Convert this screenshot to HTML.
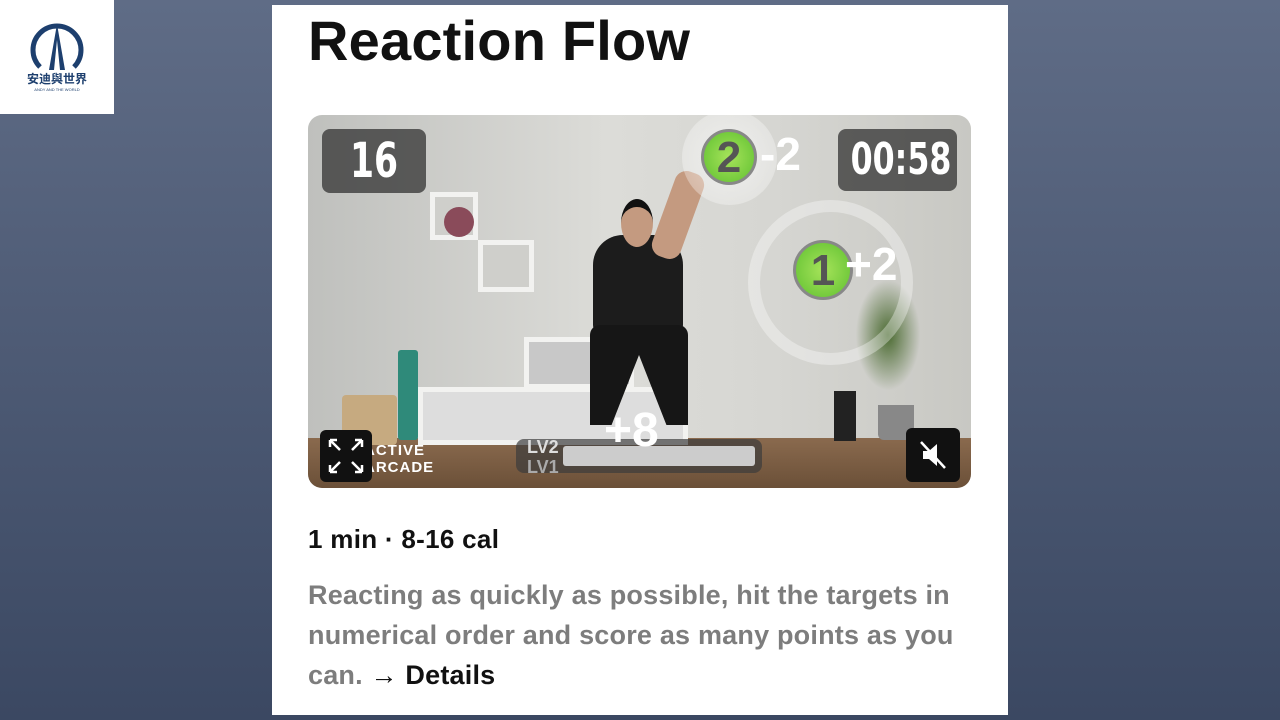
<!DOCTYPE html>
<html><head><meta charset="utf-8"><style>
body{margin:0;width:1280px;height:720px;overflow:hidden;background:linear-gradient(#5f6c86,#3b4862);font-family:"Liberation Sans","Noto Sans CJK SC",sans-serif;position:relative}
.logo{position:absolute;left:0;top:0;width:114px;height:114px;background:#fff}
.card{position:absolute;left:272px;top:5px;width:736px;height:710px;background:#fff}
h1{position:absolute;left:36px;top:3px;margin:0;font-size:56px;font-weight:bold;color:#111;letter-spacing:0.2px}
.vid{position:absolute;left:36px;top:110px;width:663px;height:373px;border-radius:14px;overflow:hidden;background:linear-gradient(90deg,#bfc0bd,#dcdcd8 45%,#d6d6d2 70%,#c8c8c3);}
.abs{position:absolute}
.box{position:absolute;border:5px solid #f2f2f0;background:#cfcfcb;box-sizing:border-box}
.hud{position:absolute;background:rgba(50,50,50,.75);border-radius:8px;color:#fff;font-weight:bold;text-align:center;font-family:"Liberation Sans Narrow","DejaVu Sans Condensed",sans-serif}
.n{display:inline-block;transform:scaleX(.8)}
.btn{position:absolute;width:52px;height:52px;background:#111;border-radius:6px}
.meta{position:absolute;left:36px;top:519px;font-size:26px;font-weight:bold;color:#111;letter-spacing:0.3px}
.desc{position:absolute;left:36px;top:570px;width:680px;font-size:27px;line-height:40px;color:#7d7d7d;font-weight:bold;letter-spacing:0.2px}
.desc b{color:#111}
</style></head><body>
<div class="logo">
<svg width="114" height="114" viewBox="0 0 114 114">
<path d="M40 67 A24 24 0 1 1 74 67" fill="none" stroke="#1d3f6e" stroke-width="5"/>
<path d="M57 24 L49 70 L54 70 L57 40 L60 70 L65 70Z" fill="#1d3f6e"/>
<text x="57" y="83" text-anchor="middle" font-size="12" font-weight="bold" fill="#1d3f6e" font-family="Noto Sans CJK SC,sans-serif">安迪與世界</text>
<text x="57" y="91" text-anchor="middle" font-size="4" fill="#1d3f6e">ANDY AND THE WORLD</text>
</svg></div>
<div class="card">
<h1>Reaction Flow</h1>
<div class="vid">
<div class="abs" style="left:0;right:0;bottom:0;height:50px;background:linear-gradient(#8a6a4e,#6b5038)"></div>
<div class="box" style="left:122px;top:77px;width:48px;height:48px"></div>
<div class="abs" style="left:136px;top:92px;width:30px;height:30px;border-radius:50%;background:#8a4b5a"></div>
<div class="box" style="left:170px;top:125px;width:56px;height:52px"></div>
<div class="box" style="left:110px;top:272px;width:270px;height:58px;background:#ddd"></div>
<div class="box" style="left:216px;top:222px;width:110px;height:52px;background:#c8c8c8"></div>
<div class="abs" style="left:90px;top:235px;width:20px;height:90px;background:#2f8a7a;border-radius:3px"></div>
<div class="abs" style="left:34px;top:280px;width:55px;height:50px;background:#c6aa80;border-radius:4px"></div>
<div class="abs" style="left:526px;top:276px;width:22px;height:50px;background:#222"></div>
<div class="abs" style="left:570px;top:290px;width:36px;height:35px;background:#888;border-radius:0 0 6px 6px"></div>
<div class="abs" style="left:545px;top:160px;width:70px;height:120px;background:radial-gradient(#4a6a30,transparent 65%)"></div>
<div class="abs" style="left:285px;top:120px;width:90px;height:100px;background:#1c1c1c;border-radius:30px 30px 10px 10px"></div>
<div class="abs" style="left:313px;top:84px;width:32px;height:40px;background:#c49a80;border-radius:50%;border-top:8px solid #111"></div>
<div class="abs" style="left:282px;top:210px;width:98px;height:100px;background:#161616;border-radius:10px 10px 0 0;clip-path:polygon(0 0,100% 0,100% 100%,78% 100%,50% 30%,22% 100%,0 100%)"></div>
<div class="abs" style="left:355px;top:55px;width:30px;height:90px;background:#c49a80;transform:rotate(20deg);border-radius:12px"></div>
<div class="abs" style="left:374px;top:-5px;width:95px;height:95px;border-radius:50%;background:radial-gradient(rgba(255,255,255,.6),rgba(255,255,255,.2))"></div>
<div class="abs" style="left:393px;top:14px;width:56px;height:56px;border-radius:50%;background:radial-gradient(#a6e35a,#5fc030);border:3px solid #888;box-sizing:border-box;text-align:center;font:bold 44px/52px 'Liberation Sans Narrow',sans-serif;color:#555">2</div>
<div class="abs" style="left:452px;top:12px;color:#fff;font:bold 46px 'Liberation Sans Narrow',sans-serif">-2</div>
<div class="abs" style="left:440px;top:85px;width:165px;height:165px;border-radius:50%;border:12px solid rgba(255,255,255,.35);box-sizing:border-box"></div>
<div class="abs" style="left:485px;top:125px;width:60px;height:60px;border-radius:50%;background:radial-gradient(#a6e35a,#5fc030);border:3px solid #888;box-sizing:border-box;text-align:center;font:bold 44px/56px 'Liberation Sans Narrow',sans-serif;color:#555">1</div>
<div class="abs" style="left:537px;top:122px;color:#fff;font:bold 46px 'Liberation Sans Narrow',sans-serif">+2</div>
<div class="hud" style="left:14px;top:14px;width:104px;height:64px;font-size:48px;line-height:64px"><span class="n">16</span></div>
<div class="hud" style="left:530px;top:14px;width:119px;height:62px;font-size:44px;line-height:62px"><span class="n">00:58</span></div>
<div class="abs" style="left:208px;top:324px;width:246px;height:34px;background:rgba(60,60,60,.7);border-radius:8px"></div>
<div class="abs" style="left:255px;top:331px;width:192px;height:20px;background:#ccc;border-radius:3px"></div>
<div class="abs" style="left:219px;top:322px;color:#ddd;font:bold 18px 'Liberation Sans Narrow',sans-serif;line-height:20px">LV2<br><span style="color:#aaa">LV1</span></div>
<div class="abs" style="left:296px;top:288px;color:#fff;font:bold 48px 'Liberation Sans Narrow',sans-serif">+8</div>
<div class="abs" style="left:56px;top:327px;color:#fff;font:bold 15px 'Liberation Sans',sans-serif;letter-spacing:1px;line-height:17px">ACTIVE<br>ARCADE</div>
<div class="btn" style="left:12px;top:315px"><svg width="52" height="52" fill="none" stroke="#fff" stroke-width="2.5"><path d="M10 10l10 10M10 10h7M10 10v7M42 10L32 20M42 10h-7M42 10v7M10 42l10-10M10 42h7M10 42v-7M42 42L32 32M42 42h-7M42 42v-7"/></svg></div>
<div class="btn" style="left:598px;top:313px;width:54px;height:54px"><svg width="54" height="54"><path d="M17 23h6l8-7v22l-8-7h-6z" fill="#fff"/><path d="M15 14l24 26" stroke="#fff" stroke-width="2.5"/></svg></div>
</div>
<div class="meta">1 min · 8-16 cal</div>
<div class="desc">Reacting as quickly as possible, hit the targets in numerical order and score as many points as you can. <b>→ Details</b></div>
</div>
</body></html>
